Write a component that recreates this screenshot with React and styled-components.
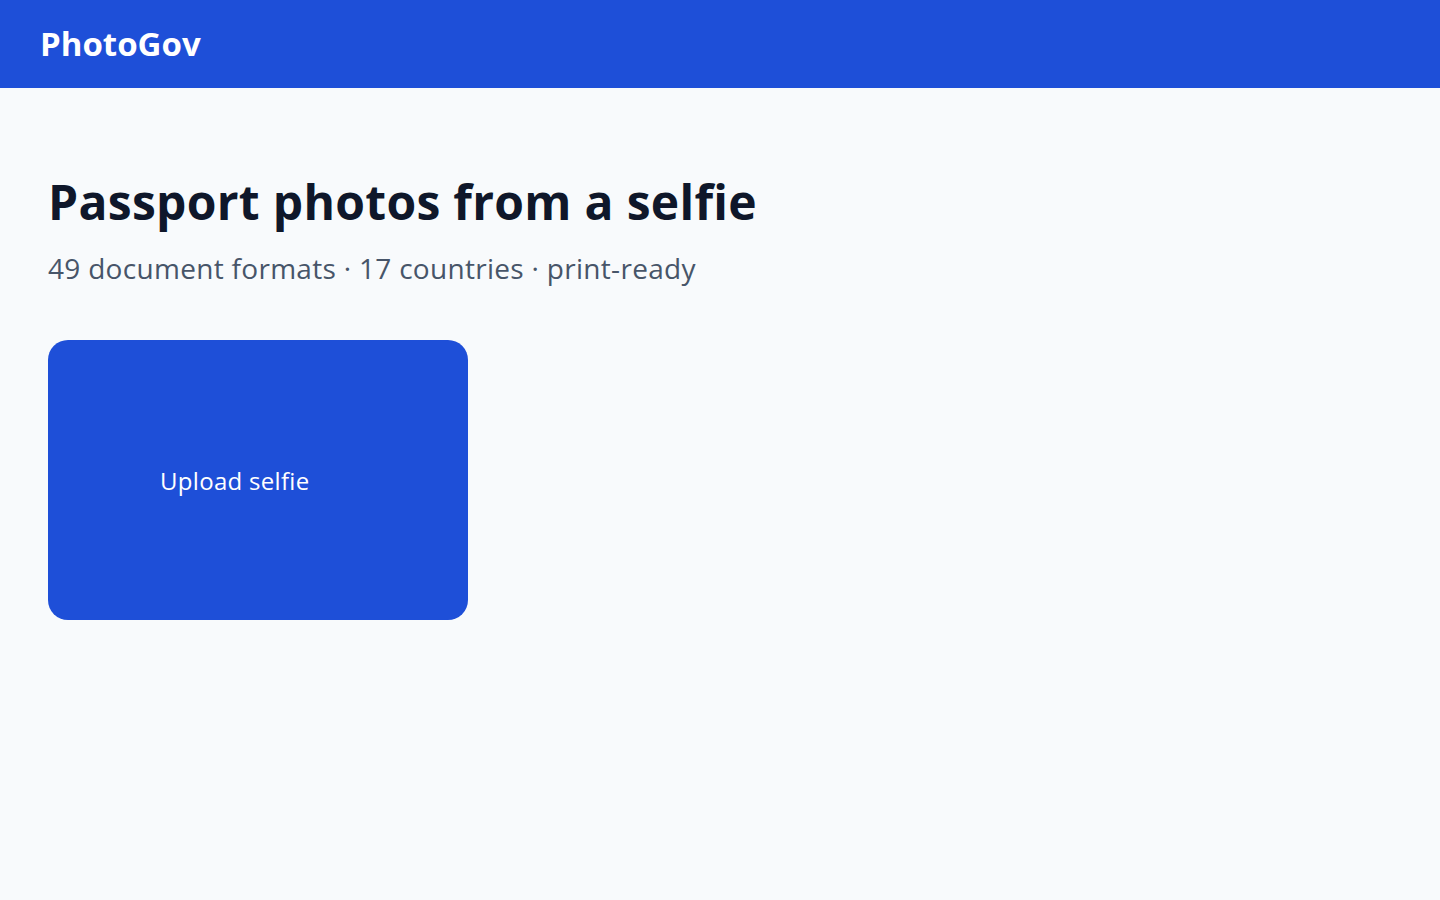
import React from 'react';
import styled, {createGlobalStyle} from 'styled-components';

const GlobalStyle = createGlobalStyle`
  html, body {
    margin: 0;
    padding: 0;
    background: #f8fafc;
    font-family: 'Open Sans', 'Noto Sans', sans-serif;
  }
`;

const TopBar = styled.header`
  height: 88px;
  background-color: #1e4fd8;
  display: flex;
  align-items: center;
  padding-left: 40px;
  padding-bottom: 2px;
  box-sizing: border-box;
`;

const Logo = styled.h1`
  margin: 0;
  color: #ffffff;
  font-size: 33px;
  font-weight: 700;
  letter-spacing: 0;
`;

const Main = styled.main`
  padding: 82px 48px 0;
  display: flex;
  flex-direction: column;
  align-items: flex-start;
`;

const Title = styled.h2`
  margin: 0;
  color: #0f172a;
  font-size: 48px;
  font-weight: 700;
  line-height: 64px;
  letter-spacing: 0.3px;
`;

const Subtitle = styled.p`
  margin: 14px 0 0;
  color: #475569;
  font-size: 28px;
  line-height: 40px;
  letter-spacing: 0.3px;
`;

const UploadButton = styled.button`
  margin-top: 52px;
  width: 420px;
  height: 280px;
  border: none;
  border-radius: 20px;
  background-color: #1e4fd8;
  color: #ffffff;
  font-family: inherit;
  font-size: 24px;
  letter-spacing: 0.3px;
  display: flex;
  align-items: center;
  padding: 0 0 0 112px;
  cursor: pointer;
`;

function App() {
  return (
    <div>
      <GlobalStyle />
      <TopBar>
        <Logo>PhotoGov</Logo>
      </TopBar>
      <Main>
        <Title>Passport photos from a selfie</Title>
        <Subtitle>49 document formats · 17 countries · print-ready</Subtitle>
        <UploadButton>Upload selfie</UploadButton>
      </Main>
    </div>
  );
}

export default App;
